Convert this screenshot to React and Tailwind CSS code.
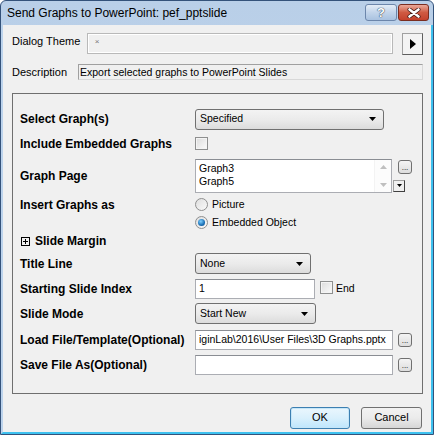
import React from "react"

const ui = { fontFamily: '"Liberation Sans", Arial, sans-serif' }

function Arrow({ className = "" }) {
  return (
    <svg width="7" height="4" viewBox="0 0 7 4" className={className}>
      <polygon points="0,0 7,0 3.5,4" fill="#000" />
    </svg>
  )
}

function Dropdown({ value, width }) {
  return (
    <div
      className={`${width} h-[21px] flex items-center justify-between pl-[4px] pr-[7px] rounded-[3px] border border-[#707070] bg-gradient-to-b from-[#f3f3f3] via-[#ebebeb] to-[#dcdcdc] text-[10.5px]`}
    >
      <span>{value}</span>
      <Arrow />
    </div>
  )
}

function Checkbox() {
  return (
    <span className="inline-block w-[13px] h-[13px] border border-[#8e8f8f] bg-gradient-to-br from-[#dcdcdc] to-[#fbfbfb] shadow-[inset_0_0_0_1px_#f4f4f4]" />
  )
}

function Radio({ checked }) {
  return (
    <span className="w-[13px] h-[13px] rounded-full border border-[#8f8f8f] bg-gradient-to-br from-[#dedede] to-[#fafafa] flex items-center justify-center">
      {checked && (
        <span className="w-[7px] h-[7px] rounded-full bg-[radial-gradient(circle_at_40%_35%,#7fd0ff,#1a6fb5_60%,#0d4a85)]" />
      )}
    </span>
  )
}

function DotsButton() {
  return (
    <div className="w-[14px] h-[14px] rounded-[3px] border border-[#707070] bg-gradient-to-b from-[#f4f4f4] to-[#dddddd] flex items-end justify-center text-[8px] leading-[8px] pb-[1px]">
      ...
    </div>
  )
}

function TextBox({ width, value }) {
  return (
    <div className={`${width} h-[20px] border border-[#abadb3] border-t-[#8a8d93] bg-white flex items-center px-[3px] text-[10.5px] overflow-hidden whitespace-nowrap`}>
      {value}
    </div>
  )
}

function Row({ label, className = "", children }) {
  return (
    <div className={`flex items-center ${className}`}>
      <div className="w-[175px] font-bold text-[12px] whitespace-nowrap">{label}</div>
      <div className="flex items-center">{children}</div>
    </div>
  )
}

export default function App() {
  return (
    <div
      style={ui}
      className="w-[434px] h-[435px] flex flex-col border border-[#34527a] rounded-t-[6px] bg-gradient-to-b from-[#b9cfe8] to-[#c9dbef] text-black overflow-hidden"
    >
      {/* Title bar */}
      <div className="h-[24px] flex items-center justify-between pl-[6px] pr-[4px]">
        <span className="text-[12px] text-black">Send Graphs to PowerPoint: pef_pptslide</span>
        <div className="flex items-center gap-[1px] self-start mt-[3px]">
          <div className="w-[32px] h-[17px] rounded-[3px] border border-[#6c86ab] bg-gradient-to-b from-[#e4edf7] via-[#c2d4ea] to-[#a9c2e0] flex items-center justify-center">
            <span className="text-white font-bold text-[13px] leading-none [text-shadow:0_0_1px_#1e2f48,0_0_1px_#1e2f48]">?</span>
          </div>
          <div className="w-[31px] h-[17px] rounded-[3px] border border-[#7a2d20] bg-gradient-to-b from-[#e9a99a] via-[#cf5a42] to-[#c4412c] flex items-center justify-center">
            <svg width="14" height="10" viewBox="0 0 14 10">
              <path d="M2.5 1.5 L11.5 8.5 M11.5 1.5 L2.5 8.5" stroke="#3a1410" strokeWidth="4" strokeLinecap="round" />
              <path d="M2.5 1.5 L11.5 8.5 M11.5 1.5 L2.5 8.5" stroke="#fff" strokeWidth="2.6" strokeLinecap="round" />
            </svg>
          </div>
        </div>
      </div>

      {/* Client area */}
      <div className="flex-1 flex flex-col bg-[#f0f0f0] border-l-2 border-l-[#bcd3ec] border-r-2 border-r-[#3ec1ef] border-b-2 border-b-[#3ec1ef] pl-[9px] pr-[8px]">
        {/* Dialog theme */}
        <div className="flex mt-[8px]">
          <div className="w-[75px] text-[11px] leading-[14px] mt-[1px] whitespace-nowrap">Dialog Theme</div>
          <div className="w-[307px] h-[21px] border border-[#b9b9b9] bg-[#f0f0f0] shadow-[inset_0_0_0_1px_#ffffff] pl-[7px] text-[8px] leading-[16px] text-[#777]">
            ×
          </div>
          <div className="ml-[9px] w-[21px] h-[22px] border border-[#a0a0a0] border-r-[#5e5e5e] border-b-[#5e5e5e] bg-[#f3f3f3] flex items-center justify-center">
            <svg width="6" height="10" viewBox="0 0 6 10">
              <polygon points="0,0 6,5 0,10" fill="#000" />
            </svg>
          </div>
        </div>

        {/* Description */}
        <div className="flex items-center mt-[9px]">
          <div className="w-[66px] text-[11px] whitespace-nowrap">Description</div>
          <div className="flex-1 h-[16px] border border-[#a0a0a0] border-r-[#d8d8d8] border-b-[#d8d8d8] bg-[#f0f0f0] pl-[1px] text-[10.5px] leading-[14px] whitespace-nowrap">
            Export selected graphs to PowerPoint Slides
          </div>
        </div>

        {/* Group box */}
        <div className="mt-[12px] h-[301px] border border-[#6f6f6f] pl-[7px] pt-[15px] flex flex-col">
          <Row label="Select Graph(s)" className="h-[21px]">
            <Dropdown value="Specified" width="w-[189px]" />
          </Row>

          <Row label="Include Embedded Graphs" className="h-[28px]">
            <Checkbox />
          </Row>

          <div className="flex mt-[1px] h-[35px]">
            <div className="w-[175px] font-bold text-[12px] self-center">Graph Page</div>
            <div className="w-[197px] h-[34px] border border-[#abadb3] border-t-[#8a8d93] bg-white flex">
              <div className="flex-1 pl-[3px] pt-[2px] text-[10.5px] leading-[13px]">
                <div>Graph3</div>
                <div>Graph5</div>
              </div>
              <div className="w-[17px] flex flex-col items-center justify-between py-[5px] border-l border-[#f3f3f3] bg-[#fcfcfc]">
                <svg width="7" height="4" viewBox="0 0 7 4">
                  <polygon points="0,4 7,4 3.5,0" fill="#bfbfbf" />
                </svg>
                <svg width="7" height="4" viewBox="0 0 7 4">
                  <polygon points="0,0 7,0 3.5,4" fill="#bfbfbf" />
                </svg>
              </div>
            </div>
            <div className="flex flex-col ml-[1px]">
              <div className="ml-[5px] mt-[1px]">
                <DotsButton />
              </div>
              <div className="mt-[6px] w-[12px] h-[12px] border border-[#a0a0a0] border-r-[#404040] border-b-[#404040] bg-[#f0f0f0] flex items-center justify-center">
                <svg width="5" height="3" viewBox="0 0 5 3">
                  <polygon points="0,0 5,0 2.5,3" fill="#000" />
                </svg>
              </div>
            </div>
          </div>

          <div className="flex mt-[2px]">
            <div className="w-[175px] font-bold text-[12px] h-[18px] flex items-center">Insert Graphs as</div>
            <div className="flex flex-col text-[10.5px]">
              <div className="h-[18px] flex items-center gap-[4px]">
                <Radio />
                <span>Picture</span>
              </div>
              <div className="h-[18px] flex items-center gap-[4px]">
                <Radio checked />
                <span>Embedded Object</span>
              </div>
            </div>
          </div>

          <div className="h-[19px] flex items-center gap-[5px] ml-[1px]">
            <span className="w-[9px] h-[9px] border border-black flex items-center justify-center">
              <svg width="7" height="7" viewBox="0 0 7 7">
                <path d="M3.5 1 V6 M1 3.5 H6" stroke="#000" strokeWidth="1" />
              </svg>
            </span>
            <span className="font-bold text-[12px]">Slide Margin</span>
          </div>

          <Row label="Title Line" className="h-[20px] mt-[3px]">
            <Dropdown value="None" width="w-[116px]" />
          </Row>

          <Row label="Starting Slide Index" className="h-[20px] mt-[5px]">
            <TextBox width="w-[120px]" value="1" />
            <span className="ml-[5px]">
              <Checkbox />
            </span>
            <span className="ml-[3px] text-[10.5px]">End</span>
          </Row>

          <Row label="Slide Mode" className="h-[20px] mt-[5px]">
            <Dropdown value="Start New" width="w-[121px]" />
          </Row>

          <Row label="Load File/Template(Optional)" className="h-[20px] mt-[6px]">
            <TextBox width="w-[198px]" value="iginLab\2016\User Files\3D Graphs.pptx" />
            <span className="ml-[5px]">
              <DotsButton />
            </span>
          </Row>

          <Row label="Save File As(Optional)" className="h-[20px] mt-[5px]">
            <TextBox width="w-[198px]" value="" />
            <span className="ml-[5px]">
              <DotsButton />
            </span>
          </Row>
        </div>

        {/* Buttons */}
        <div className="flex justify-end gap-[11px] mt-[13px] pr-[1px]">
          <div className="w-[60px] h-[22px] rounded-[3px] border border-[#3c7fb1] bg-gradient-to-b from-[#eaf6fd] via-[#d9f0fc] to-[#bee6fd] shadow-[inset_0_0_0_1px_#c5e6f8] flex items-center justify-center text-[11px]">
            OK
          </div>
          <div className="w-[61px] h-[22px] rounded-[3px] border border-[#707070] bg-gradient-to-b from-[#f2f2f2] via-[#ebebeb] to-[#d6d6d6] flex items-center justify-center text-[11px]">
            Cancel
          </div>
        </div>
      </div>
    </div>
  )
}
